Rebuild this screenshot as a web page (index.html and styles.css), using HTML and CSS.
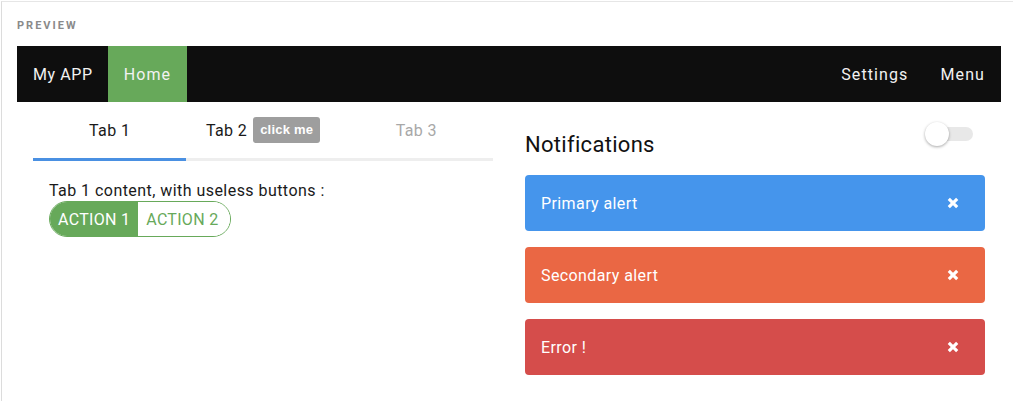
FILE: index.html
```html
<!DOCTYPE html>
<html>
<head>
<meta charset="utf-8">
<link rel="stylesheet" href="styles.css">
</head>
<body>
<div class="frame">
  <div class="label">PREVIEW</div>
  <nav class="navbar">
    <div class="nav-left">
      <span class="nav-item">My APP</span>
      <span class="nav-item active">Home</span>
    </div>
    <div class="nav-right">
      <span class="nav-item">Settings</span>
      <span class="nav-item">Menu</span>
    </div>
  </nav>
  <div class="columns">
    <section class="left">
      <div class="tabs">
        <div class="tab selected">Tab 1</div>
        <div class="tab">Tab 2 <span class="badge">click me</span></div>
        <div class="tab disabled">Tab 3</div>
      </div>
      <div class="tab-content">
        <p class="content-text">Tab 1 content, with useless buttons :</p>
        <div class="btn-group">
          <button class="btn filled">ACTION 1</button>
          <button class="btn outline">ACTION 2</button>
        </div>
      </div>
    </section>
    <section class="right">
      <div class="notif-header">
        <h2 class="notif-title">Notifications</h2>
        <div class="toggle"><span class="track"></span><span class="knob"></span></div>
      </div>
      <div class="alerts">
        <div class="alert primary"><span>Primary alert</span><svg class="close" viewBox="0 0 10 10"><path d="M1.5 1.5 L8.5 8.5 M8.5 1.5 L1.5 8.5"/></svg></div>
        <div class="alert secondary"><span>Secondary alert</span><svg class="close" viewBox="0 0 10 10"><path d="M1.5 1.5 L8.5 8.5 M8.5 1.5 L1.5 8.5"/></svg></div>
        <div class="alert error"><span>Error !</span><svg class="close" viewBox="0 0 10 10"><path d="M1.5 1.5 L8.5 8.5 M8.5 1.5 L1.5 8.5"/></svg></div>
      </div>
    </section>
  </div>
</div>
</body>
</html>
```

FILE: styles.css
```css
html, body {
  margin: 0;
  padding: 0;
  background: #fff;
  font-family: Roboto, "Noto Sans", "Liberation Sans", sans-serif;
  color: #1a1a1a;
}

.frame {
  margin: 1px 0 0 1px;
  border-left: 1px solid #dcdcdc;
  border-top: 1px solid #e6e6e6;
  padding: 0 12px 30px 15px;
  min-height: 380px;
  box-sizing: border-box;
}

.label {
  font-size: 11px;
  font-weight: 700;
  letter-spacing: 2px;
  color: #8a8a8a;
  height: 44px;
  box-sizing: border-box;
  padding-top: 17px;
  line-height: 14px;
}

.navbar {
  display: flex;
  justify-content: space-between;
  background: #0e0e0e;
  height: 56px;
}

.nav-left, .nav-right {
  display: flex;
}

.nav-item {
  display: flex;
  align-items: center;
  padding: 0 16px;
  color: #f2f2f2;
  font-size: 16px;
  letter-spacing: 1.1px;
}

.nav-left .nav-item:first-child {
  letter-spacing: 0.6px;
  padding-right: 15px;
}

.nav-item.active {
  background: #67a95a;
  padding: 0 16px 0 16px;
}

.columns {
  display: grid;
  grid-template-columns: 1fr 1fr;
  gap: 32px;
  padding: 0 16px;
}

.tabs {
  display: flex;
}

.tab {
  flex: 1;
  height: 56px;
  display: flex;
  align-items: center;
  justify-content: center;
  font-size: 16px;
  letter-spacing: 0.4px;
  color: #1a1a1a;
  border-bottom: 3px solid #eeeeee;
}

.tab.selected {
  border-bottom-color: #4a90e2;
}

.tab.disabled {
  color: #a8a8a8;
}

.badge {
  display: inline-block;
  margin-left: 6px;
  background: #9e9e9e;
  color: #fff;
  font-size: 13px;
  font-weight: 700;
  letter-spacing: 0.2px;
  font-family: "Liberation Sans", Arial, sans-serif;
  padding: 0 7px;
  height: 26px;
  line-height: 26px;
  border-radius: 3px;
}

.tab-content {
  padding: 20px 16px 0;
}

.content-text {
  margin: 0;
  font-size: 16px;
  line-height: 19px;
  letter-spacing: 0.45px;
  color: #1a1a1a;
}

.btn-group {
  display: inline-flex;
  margin-top: 1px;
  border: 1px solid #67a95a;
  border-radius: 18px;
  overflow: hidden;
}

.btn {
  font-family: inherit;
  font-size: 16px;
  letter-spacing: 0.3px;
  height: 34px;
  padding: 0 8px;
  border: none;
  margin: 0;
  cursor: pointer;
}

.btn.filled {
  background: #67a95a;
  color: #fff;
}

.btn.outline {
  background: #fff;
  color: #67a95a;
  padding-right: 12px;
}

.notif-header {
  display: flex;
  justify-content: space-between;
  align-items: flex-start;
  padding-top: 27px;
}

.notif-title {
  margin: 0;
  font-size: 22px;
  font-weight: 400;
  letter-spacing: 0.3px;
  line-height: 32px;
  color: #111;
}

.toggle {
  position: relative;
  width: 48px;
  height: 24px;
  margin-top: -7px;
  margin-right: 12px;
}

.track {
  position: absolute;
  left: 10px;
  right: 0;
  top: 5px;
  height: 14px;
  border-radius: 7px;
  background: #e8e8e8;
}

.knob {
  position: absolute;
  left: 0;
  top: 0;
  width: 24px;
  height: 24px;
  border-radius: 50%;
  background: #fff;
  box-shadow: 0 1px 3px rgba(0,0,0,0.35);
}

.alerts {
  display: flex;
  flex-direction: column;
  gap: 16px;
  margin-top: 14px;
}

.alert {
  display: flex;
  align-items: center;
  justify-content: space-between;
  height: 56px;
  padding: 0 26px 0 16px;
  border-radius: 4px;
  color: #fff;
  font-size: 16px;
  letter-spacing: 0.4px;
}

.alert.primary { background: #4595ec; }
.alert.secondary { background: #ea6744; }
.alert.error { background: #d54d4b; }

.close {
  width: 12px;
  height: 12px;
  fill: none;
  stroke: #fff;
  stroke-width: 2.6;
  stroke-linecap: butt;
}
```
